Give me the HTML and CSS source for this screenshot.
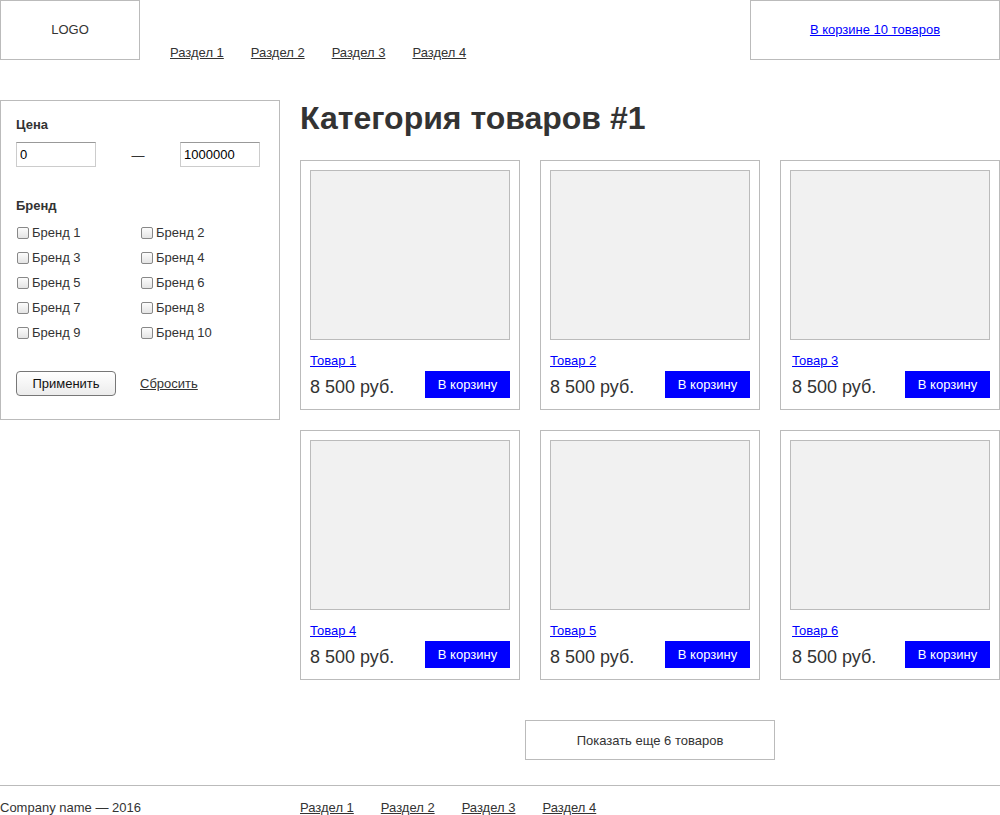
FILE: index.html
```html
<!DOCTYPE html>
<html lang="ru">
<head>
<meta charset="utf-8">
<title>Категория товаров #1</title>
<link rel="stylesheet" href="styles.css">
</head>
<body>
<header class="header">
  <div class="logo">LOGO</div>
  <nav class="nav">
    <a href="#">Раздел 1</a>
    <a href="#">Раздел 2</a>
    <a href="#">Раздел 3</a>
    <a href="#">Раздел 4</a>
  </nav>
  <div class="cart"><a href="#">В корзине 10 товаров</a></div>
</header>

<div class="page">
  <aside class="filter">
    <div class="filter-title">Цена</div>
    <div class="price-row">
      <input class="price-input" type="text" value="0">
      <span class="dash">—</span>
      <input class="price-input" type="text" value="1000000">
    </div>
    <div class="filter-title brand-title">Бренд</div>
    <div class="brands">
      <label class="brand"><input type="checkbox" class="cb">Бренд 1</label>
      <label class="brand"><input type="checkbox" class="cb">Бренд 2</label>
      <label class="brand"><input type="checkbox" class="cb">Бренд 3</label>
      <label class="brand"><input type="checkbox" class="cb">Бренд 4</label>
      <label class="brand"><input type="checkbox" class="cb">Бренд 5</label>
      <label class="brand"><input type="checkbox" class="cb">Бренд 6</label>
      <label class="brand"><input type="checkbox" class="cb">Бренд 7</label>
      <label class="brand"><input type="checkbox" class="cb">Бренд 8</label>
      <label class="brand"><input type="checkbox" class="cb">Бренд 9</label>
      <label class="brand"><input type="checkbox" class="cb">Бренд 10</label>
    </div>
    <div class="filter-actions">
      <button class="apply">Применить</button>
      <a href="#" class="reset">Сбросить</a>
    </div>
  </aside>

  <main class="main">
    <h1 class="title">Категория товаров #1</h1>
    <div class="grid">
      <div class="card">
        <div class="pic"></div>
        <a href="#" class="name">Товар 1</a>
        <div class="buy"><span class="price">8 500 руб.</span><button class="to-cart">В корзину</button></div>
      </div>
      <div class="card">
        <div class="pic"></div>
        <a href="#" class="name">Товар 2</a>
        <div class="buy"><span class="price">8 500 руб.</span><button class="to-cart">В корзину</button></div>
      </div>
      <div class="card card-shift">
        <div class="pic"></div>
        <a href="#" class="name">Товар 3</a>
        <div class="buy"><span class="price">8 500 руб.</span><button class="to-cart">В корзину</button></div>
      </div>
      <div class="card">
        <div class="pic"></div>
        <a href="#" class="name">Товар 4</a>
        <div class="buy"><span class="price">8 500 руб.</span><button class="to-cart">В корзину</button></div>
      </div>
      <div class="card">
        <div class="pic"></div>
        <a href="#" class="name">Товар 5</a>
        <div class="buy"><span class="price">8 500 руб.</span><button class="to-cart">В корзину</button></div>
      </div>
      <div class="card card-shift">
        <div class="pic"></div>
        <a href="#" class="name">Товар 6</a>
        <div class="buy"><span class="price">8 500 руб.</span><button class="to-cart">В корзину</button></div>
      </div>
    </div>
    <div class="more-wrap"><button class="more">Показать еще 6 товаров</button></div>
  </main>
</div>

<footer class="footer">
  <div class="copy">Company name — 2016</div>
  <nav class="nav footer-nav">
    <a href="#">Раздел 1</a>
    <a href="#">Раздел 2</a>
    <a href="#">Раздел 3</a>
    <a href="#">Раздел 4</a>
  </nav>
</footer>
</body>
</html>
```

FILE: styles.css
```css
* { box-sizing: border-box; }
html, body { margin: 0; padding: 0; }
body {
  font-family: "Liberation Sans", Arial, sans-serif;
  font-size: 13px;
  line-height: 16px;
  color: #333;
  background: #fff;
  width: 1000px;
}
a { color: #333; }

.header {
  display: flex;
  height: 60px;
}
.logo {
  width: 140px;
  height: 60px;
  border: 1px solid #bbb;
  display: flex;
  align-items: center;
  justify-content: center;
}
.nav {
  display: flex;
  gap: 27px;
}
.header .nav {
  margin-left: 30px;
  align-self: flex-start;
  padding-top: 45px;
}
.cart {
  margin-left: auto;
  width: 250px;
  height: 60px;
  border: 1px solid #bbb;
  display: flex;
  align-items: center;
  justify-content: center;
}
.cart a { color: #00f; }

.page {
  display: flex;
  gap: 20px;
  margin-top: 40px;
  align-items: flex-start;
}

.filter {
  width: 280px;
  height: 320px;
  border: 1px solid #bbb;
  padding: 16px 19px 0 15px;
}
.filter-title { font-weight: bold; }
.price-row {
  display: flex;
  justify-content: space-between;
  align-items: center;
  margin-top: 9px;
}
.price-input {
  width: 80px;
  height: 25px;
  border: 1px solid #ccc;
  border-top-color: #999;
  font-family: inherit;
  font-size: 13px;
  color: #000;
  padding: 2px 3px;
  margin: 0;
}
.dash { padding-top: 2px; }
.brand-title { margin-top: 31px; }
.brands {
  display: grid;
  grid-template-columns: 124px 124px;
  grid-auto-rows: 25px;
  margin-top: 6px;
}
.brand {
  display: flex;
  align-items: center;
}
.cb {
  appearance: none;
  -webkit-appearance: none;
  width: 12px;
  height: 12px;
  margin: 0 3px 0 1px;
  border: 1px solid #888;
  border-radius: 2px;
  background: linear-gradient(#fcfcfc, #e4e4e4);
}
.filter-actions {
  display: flex;
  align-items: center;
  gap: 24px;
  margin-top: 26px;
}
.apply {
  width: 100px;
  height: 25px;
  border: 1px solid #777;
  border-radius: 4px;
  background: linear-gradient(#fff, #ececec);
  font-family: inherit;
  font-size: 13px;
  color: #111;
  padding: 0;
}

.main { width: 700px; }
.title {
  margin: 0;
  font-size: 32px;
  line-height: 36px;
  font-weight: bold;
  color: #333;
}
.grid {
  display: grid;
  grid-template-columns: repeat(3, 220px);
  gap: 20px;
  margin-top: 24px;
}
.card {
  height: 250px;
  border: 1px solid #bbb;
  padding: 9px;
  display: flex;
  flex-direction: column;
}
.pic {
  height: 170px;
  border: 1px solid #bbb;
  background: #f1f1f1;
}
.name {
  color: #00f;
  margin-top: 13px;
  align-self: flex-start;
}
.card-shift .name, .card-shift .price { margin-left: 2px; }
.buy {
  display: flex;
  justify-content: space-between;
  align-items: flex-end;
  margin-top: 2px;
}
.price {
  font-size: 18px;
  line-height: 21px;
}
.to-cart {
  width: 85px;
  height: 27px;
  border: 0;
  background: #00f;
  color: #fff;
  font-family: inherit;
  font-size: 13px;
  padding: 0;
}
.more-wrap {
  display: flex;
  justify-content: center;
  margin-top: 40px;
}
.more {
  width: 250px;
  height: 40px;
  border: 1px solid #bbb;
  background: #fff;
  font-family: inherit;
  font-size: 13px;
  color: #333;
  padding: 0;
}

.footer {
  display: flex;
  margin-top: 25px;
  border-top: 1px solid #bbb;
  padding-top: 14px;
}
.copy { width: 300px; }
```
